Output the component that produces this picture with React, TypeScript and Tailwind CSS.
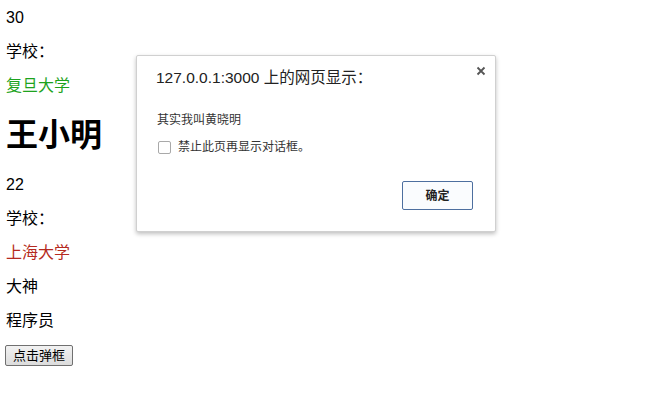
import React from 'react';

function Dialog() {
  return (
    <div className="absolute left-[136px] top-[55px] w-[360px] h-[177px] bg-white border border-[#d0d0d0] rounded-[2px] shadow-[0_2px_4px_rgba(0,0,0,0.25)] text-[#333]">
      <button className="absolute right-[7px] top-[8px] w-[14px] h-[14px] flex items-center justify-center">
        <svg width="10" height="10" viewBox="0 0 10 10">
          <path d="M1.5 1.5L8.5 8.5M8.5 1.5L1.5 8.5" stroke="#555" strokeWidth="1.8" />
        </svg>
      </button>
      <div className="pl-[19px] pt-[12px] text-[15.5px] leading-[20px] text-[#222]">127.0.0.1:3000 上的网页显示：</div>
      <div className="pl-[20px] pt-[24px] text-[12px] leading-[16px]">其实我叫黄晓明</div>
      <label className="flex items-center pl-[21px] pt-[11px] text-[12px] leading-[16px] gap-[7px]">
        <span className="w-[13px] h-[13px] border border-[#a9a9a9] rounded-[2px] bg-white" />
        <span>禁止此页再显示对话框。</span>
      </label>
      <div className="flex justify-end pr-[22px] pt-[26px]">
        <button className="w-[71px] h-[29px] border border-[#4d6f9f] rounded-[2px] bg-[#fafcfe] text-[12px] font-bold text-[#222]">
          确定
        </button>
      </div>
    </div>
  );
}

export default function App() {
  return (
    <div
      className="relative w-[669px] h-[405px] bg-white text-black pl-[6px] pt-[9px]"
      style={{ fontFamily: '"Liberation Sans", "Noto Sans CJK SC", sans-serif' }}
    >
      <p className="text-[16px] leading-[18px]">30</p>
      <p className="mt-[16px] text-[16px] leading-[18px]">学校：</p>
      <p className="mt-[16px] text-[16px] leading-[18px] text-[#1ea31e]">复旦大学</p>
      <h1 className="mt-[21px] text-[32px] leading-[38px] font-semibold">王小明</h1>
      <p className="mt-[22px] text-[16px] leading-[18px]">22</p>
      <p className="mt-[16px] text-[16px] leading-[18px]">学校：</p>
      <p className="mt-[16px] text-[16px] leading-[18px] text-[#b52a20]">上海大学</p>
      <p className="mt-[16px] text-[16px] leading-[18px]">大神</p>
      <p className="mt-[16px] text-[16px] leading-[18px]">程序员</p>
      <button className="mt-[15px] -ml-[1px] h-[21px] px-[7px] text-[13px] leading-[16px] border border-[#707070] rounded-[2px] bg-gradient-to-b from-[#f2f2f2] to-[#dcdcdc]">
        点击弹框
      </button>
      <Dialog />
    </div>
  );
}
